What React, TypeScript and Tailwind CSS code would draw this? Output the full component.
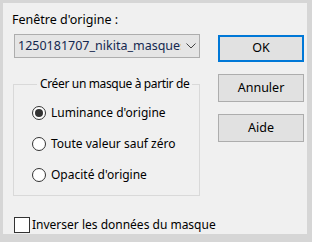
import React from "react";

const font = { fontFamily: '"Noto Sans", "Open Sans", sans-serif' };

function Radio({ label, checked }: { label: string; checked?: boolean }) {
  return (
    <div className="flex h-[16px] items-center">
      <div className="flex h-[14px] w-[14px] items-center justify-center rounded-full border border-[#333333] bg-white">
        {checked && <div className="h-[8px] w-[8px] rounded-full bg-[#333333]" />}
      </div>
      <span className="ml-[5px] whitespace-nowrap text-[12px] leading-[16px] text-black">{label}</span>
    </div>
  );
}

function Button({ label, primary }: { label: string; primary?: boolean }) {
  return (
    <div
      className={
        "flex w-[86px] items-center justify-center bg-[#e1e1e1] text-[12.5px] text-black " +
        (primary ? "h-[27px] border-2 border-[#0078d7]" : "h-[28px] border border-[#adadad]")
      }
    >
      {label}
    </div>
  );
}

export default function App() {
  return (
    <div className="h-[242px] w-[312px] bg-[#d6d6d6] pb-[8px] pl-[3px] pr-[5px] pt-[3px]" style={font}>
      <div className="flex h-full flex-col bg-[#f0f0f0] pl-[9px]">
        <div className="flex">
          <div className="flex w-[188px] flex-col">
            <div className="mt-[9px] text-[12.5px] leading-[16px] text-black">Fenêtre d'origine :</div>
            <div className="ml-[2px] mt-[6px] flex h-[24px] w-[186px] items-center border border-[#adadad] bg-[#e5e5e5] pl-[3px]">
              <span className="w-[163px] overflow-hidden whitespace-nowrap text-[12.5px] text-[#142850]">
                1250181707_nikita_masques
              </span>
              <svg width="10" height="6" viewBox="0 0 10 6" className="ml-[5px]">
                <path d="M0.5 0.5 L5 5 L9.5 0.5" fill="none" stroke="#444" strokeWidth="1" />
              </svg>
            </div>
            <fieldset className="ml-[1px] mt-[18px] h-[120px] w-[187px] min-w-0 border border-[#d9d9d9] pl-[18px]">
              <legend className="ml-[5px] whitespace-nowrap px-[3px] text-[12px] leading-[16px] tracking-[-0.35px] text-black">
                Créer un masque à partir de
              </legend>
              <div className="mt-[13px] flex flex-col gap-[15px]">
                <Radio label="Luminance d'origine" checked />
                <Radio label="Toute valeur sauf zéro" />
                <Radio label="Opacité d'origine" />
              </div>
            </fieldset>
          </div>
          <div className="ml-[18px] mt-[32px] flex flex-col gap-[12px]">
            <Button label="OK" primary />
            <Button label="Annuler" />
            <Button label="Aide" />
          </div>
        </div>
        <div className="ml-[2px] mt-[21px] flex items-center">
          <div className="h-[16px] w-[16px] border border-[#333333] bg-white" />
          <span className="ml-[2px] text-[12px] leading-[16px] text-black">Inverser les données du masque</span>
        </div>
      </div>
    </div>
  );
}
